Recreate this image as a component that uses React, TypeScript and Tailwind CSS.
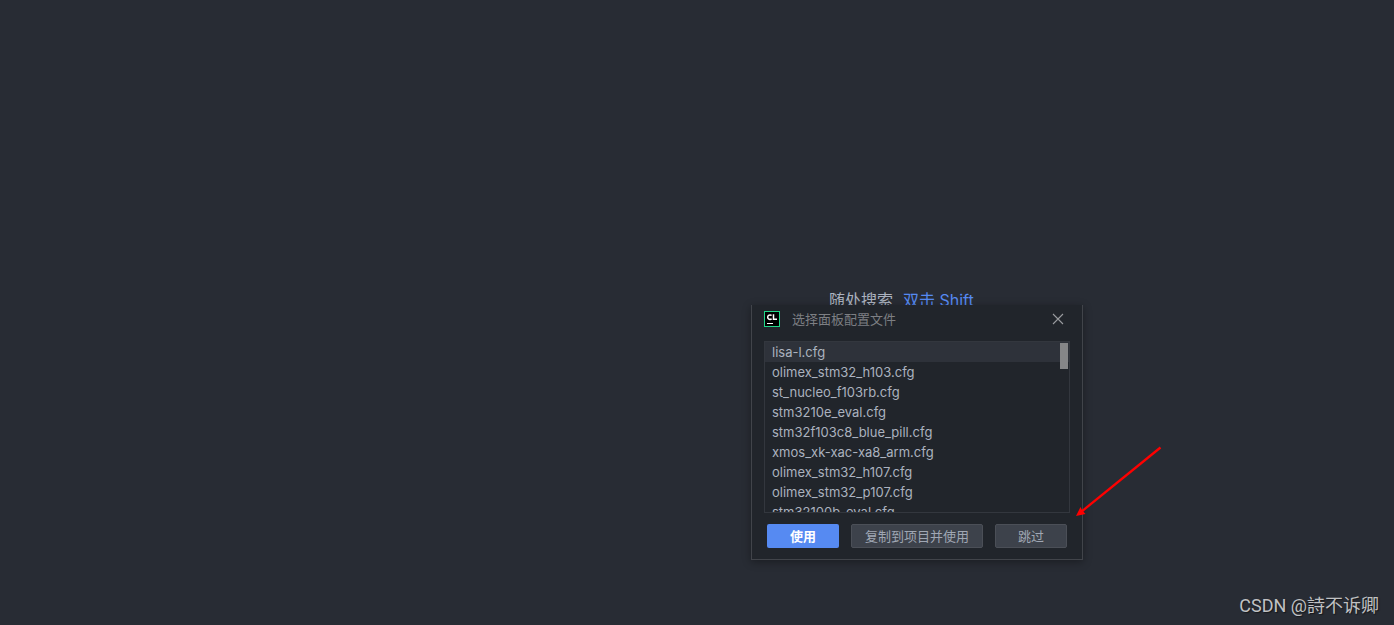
import { useState } from "react";
import clsx from "clsx";

const boardConfigs = [
  "lisa-l.cfg",
  "olimex_stm32_h103.cfg",
  "st_nucleo_f103rb.cfg",
  "stm3210e_eval.cfg",
  "stm32f103c8_blue_pill.cfg",
  "xmos_xk-xac-xa8_arm.cfg",
  "olimex_stm32_h107.cfg",
  "olimex_stm32_p107.cfg",
  "stm32100b_eval.cfg",
];

const CLionIcon = () => (
  <svg width="16" height="16" viewBox="0 0 16 16" aria-hidden="true">
    <rect width="16" height="16" fill="#21d789" />
    <rect x="1" y="1" width="14" height="14" fill="#000" />
    <path
      d="M7.600 4.600A2.250 2.250 0 1 0 7.600 7.700M9.500 3.200V8.300H13"
      fill="none"
      stroke="#fff"
      strokeWidth="1.5"
    />
    <rect x="3" y="12" width="6" height="1" fill="#fff" />
  </svg>
);

const CloseIcon = () => (
  <svg width="12" height="12" viewBox="0 0 12 12" aria-hidden="true">
    <path d="M1 1L11 11M11 1L1 11" stroke="#9a9c9f" strokeWidth="1.1" />
  </svg>
);

const Arrow = () => (
  <svg
    className="absolute left-[1076px] top-[446px]"
    width="86"
    height="72"
    viewBox="0 0 86 72"
    aria-hidden="true"
  >
    <path d="M84.500 1.500L5 66" stroke="#f00" strokeWidth="2.3" />
    <path d="M0 70L4.500 61L6 64L9.500 68Z" fill="#f00" />
  </svg>
);

const buttonStyle =
  "h-6 rounded-xs border border-[#4b4f57] bg-[#3d424b] text-[13px] leading-5 text-[#a0a7b4]";

const BoardConfigDialog = () => {
  const [selected, setSelected] = useState(boardConfigs[0]);

  return (
    <div
      role="dialog"
      aria-labelledby="dialog-title"
      className="absolute left-[751px] top-[305px] w-[332px] border border-t-0 border-[#41444a] bg-[#21252b] px-3 pb-[11px] shadow-[0_2px_8px_rgba(0,0,0,0.35)]"
    >
      <div className="flex h-9 items-start gap-3 pt-1">
        <div className="flex h-5 items-center">
          <CLionIcon />
        </div>
        <h1
          id="dialog-title"
          className="flex-1 text-[13px] leading-5 text-[#7d7f83]"
        >
          选择面板配置文件
        </h1>
        <button
          aria-label="Close"
          className="flex h-5 w-6 items-center justify-center"
        >
          <CloseIcon />
        </button>
      </div>
      <div className="relative h-[172px] overflow-hidden border border-[#33373e]">
        <ul role="listbox" aria-labelledby="dialog-title">
          {boardConfigs.map((name) => (
            <li
              key={name}
              role="option"
              aria-selected={name === selected}
              onClick={() => setSelected(name)}
              className={clsx(
                "h-5 px-[7px] text-[13px] leading-5 text-[#abb2bf]",
                name === selected && "bg-[#2e323a]"
              )}
            >
              {name}
            </li>
          ))}
        </ul>
        <div className="absolute right-px top-px h-[26px] w-2 bg-[#858688]" />
      </div>
      <div className="mt-[11px] flex gap-3 px-[3px]">
        <button className="h-6 w-[72px] rounded-xs bg-[#568af2] text-[13px] leading-5 font-bold text-white">
          使用
        </button>
        <button className={clsx(buttonStyle, "flex-1")}>
          复制到项目并使用
        </button>
        <button className={clsx(buttonStyle, "w-[72px]")}>跳过</button>
      </div>
    </div>
  );
};

const App = () => {
  return (
    <main className="relative flex min-h-screen flex-col justify-between overflow-hidden bg-[#282c34] font-['Inter','Noto_Sans_CJK_SC',sans-serif]">
      <p className="flex gap-[10px] pl-[829px] pt-[288px] text-base leading-6 text-[#abb2bf]">
        <span>随处搜索</span>
        <span className="text-[#568af2]">双击 Shift</span>
      </p>
      <BoardConfigDialog />
      <Arrow />
      <p className="self-end pr-[15px] pb-[7px] font-['Roboto','Noto_Sans_CJK_SC',sans-serif] text-lg leading-6 text-[#c0c1c3] [text-shadow:1px_1px_1px_#15171b]">
        CSDN @詩不诉卿
      </p>
    </main>
  );
};

export default App;
